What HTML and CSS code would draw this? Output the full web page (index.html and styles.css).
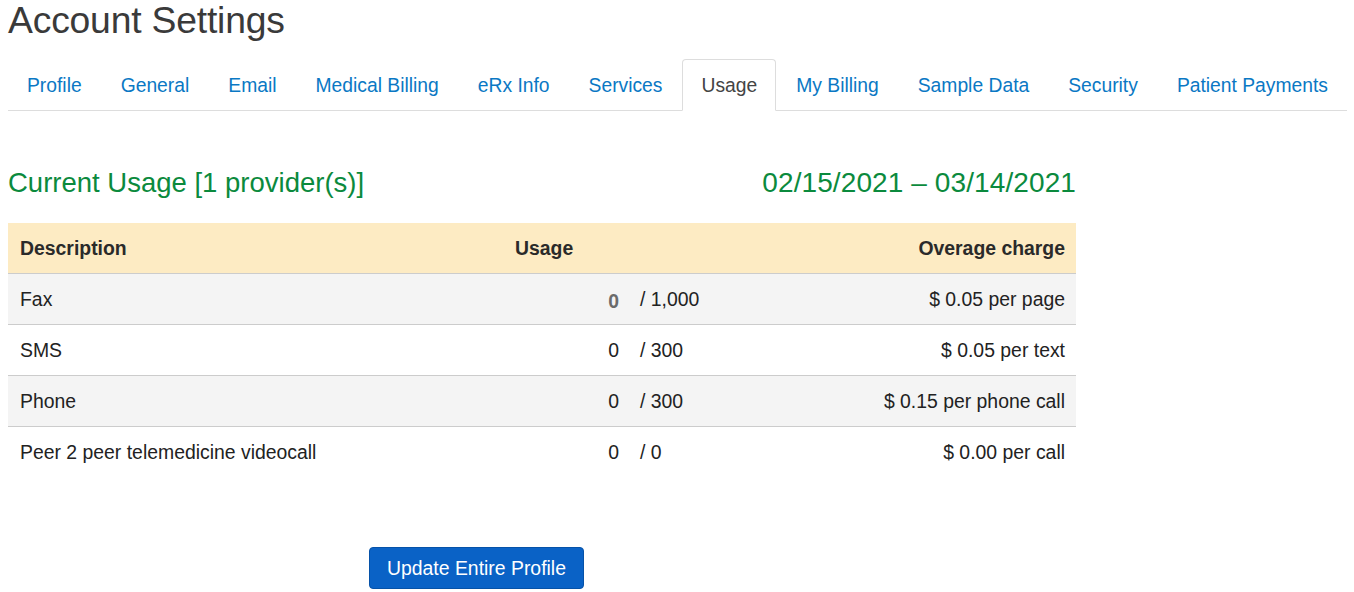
FILE: index.html
```html
<!DOCTYPE html>
<html lang="en">
<head>
<meta charset="utf-8">
<title>Account Settings</title>
<link rel="stylesheet" href="styles.css">
</head>
<body>
<div class="page">
  <h1 class="title">Account Settings</h1>
  <ul class="tabs">
    <li class="tab"><a href="#">Profile</a></li>
    <li class="tab"><a href="#">General</a></li>
    <li class="tab"><a href="#">Email</a></li>
    <li class="tab"><a href="#">Medical Billing</a></li>
    <li class="tab"><a href="#">eRx Info</a></li>
    <li class="tab"><a href="#">Services</a></li>
    <li class="tab active"><a href="#">Usage</a></li>
    <li class="tab"><a href="#">My Billing</a></li>
    <li class="tab"><a href="#">Sample Data</a></li>
    <li class="tab"><a href="#">Security</a></li>
    <li class="tab"><a href="#">Patient Payments</a></li>
  </ul>

  <div class="usage">
    <div class="usage-head">
      <h2 class="usage-title">Current Usage [1 provider(s)]</h2>
      <div class="usage-period">02/15/2021 – 03/14/2021</div>
    </div>

    <table class="usage-table">
      <colgroup>
        <col class="c-desc">
        <col class="c-num">
        <col class="c-limit">
        <col class="c-charge">
      </colgroup>
      <thead>
        <tr>
          <th class="th-desc">Description</th>
          <th class="th-usage" colspan="2">Usage</th>
          <th class="th-charge">Overage charge</th>
        </tr>
      </thead>
      <tbody>
        <tr>
          <td>Fax</td>
          <td class="num"><span class="num-input">0</span></td>
          <td class="limit">/ 1,000</td>
          <td class="charge">$ 0.05 per page</td>
        </tr>
        <tr>
          <td>SMS</td>
          <td class="num">0</td>
          <td class="limit">/ 300</td>
          <td class="charge">$ 0.05 per text</td>
        </tr>
        <tr>
          <td>Phone</td>
          <td class="num">0</td>
          <td class="limit">/ 300</td>
          <td class="charge">$ 0.15 per phone call</td>
        </tr>
        <tr>
          <td>Peer 2 peer telemedicine videocall</td>
          <td class="num">0</td>
          <td class="limit">/ 0</td>
          <td class="charge">$ 0.00 per call</td>
        </tr>
      </tbody>
    </table>

    <div class="actions">
      <button class="btn-primary" type="button">Update Entire Profile</button>
    </div>
  </div>
</div>
</body>
</html>
```

FILE: styles.css
```css
* { box-sizing: border-box; }

html, body {
  margin: 0;
  padding: 0;
  background: #ffffff;
}

body {
  font-family: "Liberation Sans", Arial, Helvetica, sans-serif;
  color: #333333;
  overflow: hidden;
}

.page {
  padding: 0 7px 0 8px;
}

.title {
  margin: 0;
  font-size: 37.3px;
  font-weight: normal;
  line-height: 41px;
  color: #3a3a3a;
  letter-spacing: -0.2px;
}

.tabs {
  list-style: none;
  margin: 18px 0 0 0;
  padding: 0;
  display: flex;
  flex-wrap: nowrap;
  border-bottom: 1px solid #dddddd;
}

.tab {
  flex: 0 0 auto;
  margin: 0 1px -1px 0;
}

.tab a {
  display: block;
  padding: 13px 18px 12px 18px;
  line-height: 25px;
  font-size: 19.3px;
  white-space: nowrap;
  color: #0a78c4;
  text-decoration: none;
  border: 1px solid transparent;
  border-radius: 4px 4px 0 0;
}

.tab.active a {
  color: #444444;
  background: #ffffff;
  border-color: #dddddd;
  border-bottom-color: #ffffff;
}

.usage {
  width: 1068px;
}

.usage-head {
  display: flex;
  justify-content: space-between;
  align-items: baseline;
  margin-top: 56px;
  height: 56px;
}

.usage-title {
  margin: 0;
  font-size: 27.5px;
  font-weight: normal;
  line-height: 32px;
  color: #0b8a3d;
}

.usage-period {
  font-size: 28px;
  line-height: 32px;
  color: #0b8a3d;
  letter-spacing: 0.1px;
}

.usage-table {
  width: 100%;
  border-collapse: collapse;
  table-layout: fixed;
  font-size: 19.4px;
  color: #222222;
}

.c-desc { width: 500px; }
.c-num { width: 120px; }
.c-limit { width: 200px; }
.c-charge { width: auto; }

.usage-table th,
.usage-table td {
  padding: 12px 12px;
  line-height: 26px;
  white-space: nowrap;
}

.usage-table thead th {
  background: #fdebc3;
  font-weight: bold;
  color: #2a2a2a;
  text-align: left;
}

.usage-table .th-usage {
  padding-left: 7px;
}

.usage-table .th-charge {
  text-align: right;
  padding-right: 11px;
}

.usage-table tbody tr {
  border-top: 1px solid #cccccc;
}

.usage-table tbody tr:nth-child(odd) {
  background: #f4f4f4;
}

.usage-table .num {
  text-align: right;
  padding-right: 9px;
}

.num-input {
  display: inline-block;
  color: #6b6b6b;
  font-weight: bold;
  transform: translateY(2px);
}

.usage-table .limit {
  padding-left: 12px;
}

.usage-table .charge {
  text-align: right;
  padding-right: 11px;
}

.actions {
  padding: 70px 0 0 361px;
}

.btn-primary {
  font-family: "Liberation Sans", Arial, Helvetica, sans-serif;
  font-size: 19.4px;
  line-height: 24px;
  padding: 8px 17px;
  color: #ffffff;
  background: #0a62c6;
  border: 1px solid #0652a8;
  border-radius: 4px;
  cursor: pointer;
}
```
